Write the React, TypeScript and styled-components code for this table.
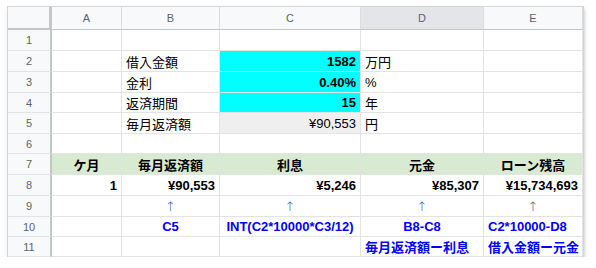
import React from 'react';
import styled, { createGlobalStyle } from 'styled-components';

const GlobalStyle = createGlobalStyle`
  html, body {
    margin: 0;
    padding: 0;
    background: #ffffff;
  }
  body {
    font-family: 'Liberation Sans', Arial, 'Noto Sans CJK JP', sans-serif;
  }
`;

const Page = styled.div`
  padding: 7px 0 0 8px;
`;

const Sheet = styled.div`
  display: grid;
  grid-template-columns: 44px 70px 98px 141px 123px 99px;
  grid-template-rows: 23px 21px 21px 21px 20px 21px 20px 21px 21px 21px 20px 20px;
  width: 575px;
  background: #ffffff;
  box-shadow: 0 0 0 1px #d4d4d4, 1px 2px 4px rgba(0, 0, 0, 0.28);
`;

const ColHead = styled.div<{ $active?: boolean }>`
  display: flex;
  align-items: center;
  justify-content: center;
  background: ${({ $active }) => ($active ? '#e3e5e8' : '#f8f9fa')};
  color: #5f6368;
  font-size: 11px;
  border-right: 1px solid #dadce0;
  border-bottom: 1px solid #c4c7c5;
`;

const Corner = styled.div`
  background: #f8f9fa;
  border-right: 3px solid #c4c7c5;
  border-bottom: 2px solid #c4c7c5;
`;

const RowHead = styled.div`
  display: flex;
  align-items: center;
  justify-content: center;
  background: #f8f9fa;
  color: #5f6368;
  font-size: 11px;
  border-right: 2px solid #c4c7c5;
  border-bottom: 1px solid #e2e3e3;
`;

type Align = 'left' | 'center' | 'right';

const Cell = styled.div<{ $align?: Align; $bg?: string; $bold?: boolean; $color?: string }>`
  display: flex;
  align-items: center;
  justify-content: ${({ $align }) =>
    $align === 'right' ? 'flex-end' : $align === 'center' ? 'center' : 'flex-start'};
  padding: 0 4px 0 4px;
  background: ${({ $bg }) => $bg || '#ffffff'};
  color: ${({ $color }) => $color || '#000000'};
  font-weight: ${({ $bold }) => ($bold ? 700 : 400)};
  font-size: 13px;
  white-space: nowrap;
  overflow: visible;
  border-right: 1px solid #e2e3e3;
  border-bottom: 1px solid #e2e3e3;
`;

const Arrow = styled.span`
  color: #40607e;
  font-family: 'DejaVu Sans', sans-serif;
  font-size: 13px;
  font-weight: 300;
`;

type CellData = {
  text?: React.ReactNode;
  align?: Align;
  bg?: string;
  bold?: boolean;
  color?: string;
};

const CYAN = '#00ffff';
const GREEN = '#d9ead3';
const BLUE = '#0000ff';

const arrow = <Arrow>↑</Arrow>;

const rows: CellData[][] = [
  [{}, {}, {}, {}, {}],
  [{}, { text: '借入金額' }, { text: '1582', align: 'right', bg: CYAN, bold: true }, { text: '万円' }, {}],
  [{}, { text: '金利' }, { text: '0.40%', align: 'right', bg: CYAN, bold: true }, { text: '%' }, {}],
  [{}, { text: '返済期間' }, { text: '15', align: 'right', bg: CYAN, bold: true }, { text: '年' }, {}],
  [{}, { text: '毎月返済額' }, { text: '¥90,553', align: 'right', bg: '#efefef' }, { text: '円' }, {}],
  [{}, {}, {}, {}, {}],
  [
    { text: 'ケ月', align: 'center', bg: GREEN, bold: true },
    { text: '毎月返済額', align: 'center', bg: GREEN, bold: true },
    { text: '利息', align: 'center', bg: GREEN, bold: true },
    { text: '元金', align: 'center', bg: GREEN, bold: true },
    { text: 'ローン残高', align: 'center', bg: GREEN, bold: true },
  ],
  [
    { text: '1', align: 'right', bold: true },
    { text: '¥90,553', align: 'right', bold: true },
    { text: '¥5,246', align: 'right', bold: true },
    { text: '¥85,307', align: 'right', bold: true },
    { text: '¥15,734,693', align: 'right', bold: true },
  ],
  [
    {},
    { text: arrow, align: 'center' },
    { text: arrow, align: 'center' },
    { text: arrow, align: 'center' },
    { text: arrow, align: 'center' },
  ],
  [
    {},
    { text: 'C5', align: 'center', bold: true, color: BLUE },
    { text: 'INT(C2*10000*C3/12)', align: 'center', bold: true, color: BLUE },
    { text: 'B8-C8', align: 'center', bold: true, color: BLUE },
    { text: 'C2*10000-D8', align: 'left', bold: true, color: BLUE },
  ],
  [
    {},
    {},
    {},
    { text: '毎月返済額ー利息', bold: true, color: BLUE },
    { text: '借入金額ー元金', bold: true, color: BLUE },
  ],
];

const columns = ['A', 'B', 'C', 'D', 'E'];

const App: React.FC = () => {
  return (
    <Page>
      <GlobalStyle />
      <Sheet>
        <Corner />
        {columns.map((c) => (
          <ColHead key={c} $active={c === 'D'}>
            {c}
          </ColHead>
        ))}
        {rows.map((row, r) => (
          <React.Fragment key={r}>
            <RowHead>{r + 1}</RowHead>
            {row.map((cell, i) => (
              <Cell
                key={i}
                $align={cell.align}
                $bg={cell.bg}
                $bold={cell.bold}
                $color={cell.color}
              >
                {cell.text}
              </Cell>
            ))}
          </React.Fragment>
        ))}
      </Sheet>
    </Page>
  );
};

export default App;
